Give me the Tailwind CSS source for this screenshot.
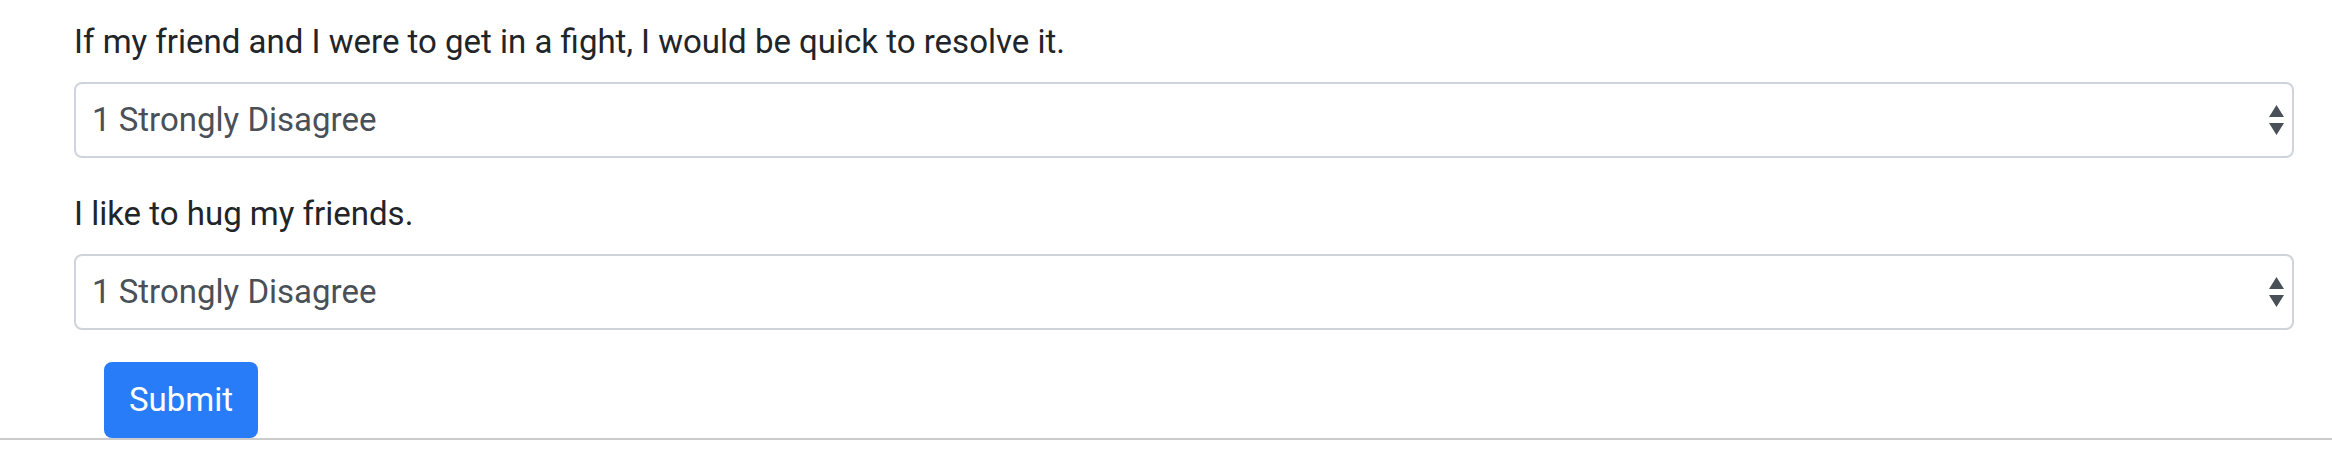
<!DOCTYPE html>
<html lang="en">
<head>
<meta charset="utf-8">
<meta name="viewport" content="width=device-width, initial-scale=1">
<title>Friendship survey</title>
<script src="https://cdn.jsdelivr.net/npm/@tailwindcss/browser@4"></script>
</head>
<body class="bg-white font-['Roboto','Liberation_Sans',sans-serif] text-[33px] leading-[48px] text-[#212529]">
<form class="flex flex-col gap-8 border-b-2 border-[#cccccc] pt-[18px] pr-[38px] pl-[74px]">
  <div class="flex flex-col gap-4">
    <label for="resolve">If my friend and I were to get in a fight, I would be quick to resolve it.</label>
    <div class="relative">
      <select id="resolve" class="block h-[76px] w-full appearance-none rounded-lg border-2 border-[#ced4da] bg-white pr-12 pl-4 text-[#495057]">
        <option>1 Strongly Disagree</option><option>2</option><option>3</option><option>4</option><option>5 Strongly Agree</option>
      </select>
      <svg class="pointer-events-none absolute top-[23px] right-[10px] h-[30px] w-[15px] fill-[#495057]" viewBox="0 0 15 30" aria-hidden="true"><path d="M7.5 0L15 12H0zM7.5 30L0 18h15z"/></svg>
    </div>
  </div>
  <div class="flex flex-col gap-4">
    <label for="hug">I like to hug my friends.</label>
    <div class="relative">
      <select id="hug" class="block h-[76px] w-full appearance-none rounded-lg border-2 border-[#ced4da] bg-white pr-12 pl-4 text-[#495057]">
        <option>1 Strongly Disagree</option><option>2</option><option>3</option><option>4</option><option>5 Strongly Agree</option>
      </select>
      <svg class="pointer-events-none absolute top-[23px] right-[10px] h-[30px] w-[15px] fill-[#495057]" viewBox="0 0 15 30" aria-hidden="true"><path d="M7.5 0L15 12H0zM7.5 30L0 18h15z"/></svg>
    </div>
  </div>
  <button type="submit" class="ml-[30px] h-[76px] w-[154px] self-start rounded-lg bg-[#287cf7] text-white">Submit</button>
</form>
</body>
</html>
